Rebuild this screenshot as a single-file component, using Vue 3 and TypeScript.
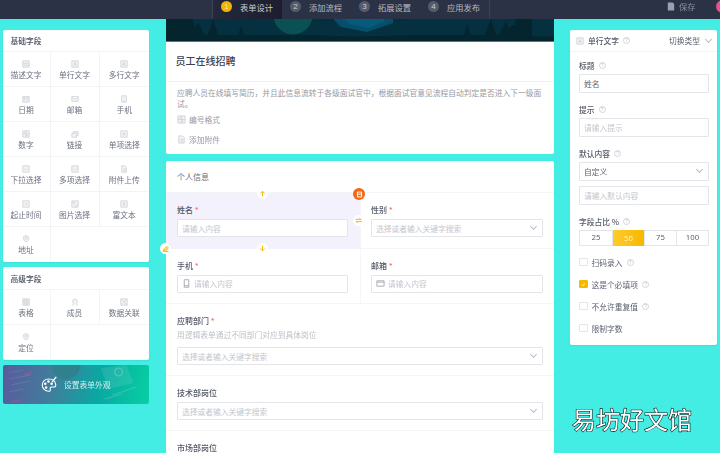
<script setup lang="ts">
const icons: Record<string, string> = {
  desc: 'M1 1h8v8H1zM1 4h8M1 6.5h8',
  text: 'M1 1h8v8H1zM3.5 7l1.5-4 1.5 4M4 5.8h2',
  date: 'M1 2h8v7H1zM1 4h8M3 1v2M7 1v2M3 5.5h1M6 5.5h1M3 7h1M6 7h1',
  mail: 'M1 2h8v6H1zM1 2.5l4 3 4-3',
  phone: 'M2 1h6v8H2zM4 7.6h2',
  num: 'M1 1h8v8H1zM5 1v8M1 5h8M2.5 3h1.5M6 7h1.5',
  link: 'M1 4h6v5H1zM3 4V2h6v5H7',
  radio: 'M1 1h8v8H1zM4 4h2v2H4z',
  drop: 'M1 1h8v8H1zM3 4l2 2 2-2',
  check: 'M1 1h8v8H1zM3 5l1.5 1.5L8 3',
  file: 'M2 1h4l2 2v6H2zM4 5h3M4 7h3',
  time: 'M1 1h8v8H1zM5 3v2.5h2',
  image: 'M1 1h8v8H1zM1 3h3v3M5 9l4-4',
  rich: 'M1 1h8v8H1zM3.5 7L5 3l1.5 4',
  pin: 'M5 .8a3.4 3.4 0 0 1 3.4 3.4C8.400 6.500 5 9.200 5 9.200S1.600 6.500 1.600 4.200A3.400 3.400 0 0 1 5 .8zM5 3a1.200 1.200 0 1 0 0 2.400A1.200 1.200 0 0 0 5 3z',
  table: 'M1 1h8v8H1zM1 3.700h8M1 6.300h8M3.700 1v8M6.300 1v8',
  user: 'M3 8V6.500A3 3 0 1 1 7 6.500V8M1.500 8.800h2M6.500 8.800h2',
  data: 'M1 1h8v8H1zM1 1l8 8M9 1L5 5M3 6.500l-1 1',
}
const basic = [
  ['描述文字', 'desc'], ['单行文字', 'text'], ['多行文字', 'text'],
  ['日期', 'date'], ['邮箱', 'mail'], ['手机', 'phone'],
  ['数字', 'num'], ['链接', 'link'], ['单项选择', 'radio'],
  ['下拉选择', 'drop'], ['多项选择', 'check'], ['附件上传', 'file'],
  ['起止时间', 'time'], ['图片选择', 'image'], ['富文本', 'rich'],
  ['地址', 'pin'],
]
const advanced = [['表格', 'table'], ['成员', 'user'], ['数据关联', 'data'], ['定位', 'pin']]
const steps = [['1', '表单设计'], ['2', '添加流程'], ['3', '拓展设置'], ['4', '应用发布']]
const checks = [
  ['扫码录入', false, true], ['这是个必填项', true, true],
  ['不允许重复值', false, true], ['限制字数', false, false],
] as const
</script>

<template>
  <div class="page">
    <header class="topbar">
      <nav class="steps">
        <div v-for="(s, i) in steps" :key="s[0]" class="step" :class="{ active: i === 0 }">
          <span class="num">{{ s[0] }}</span><span>{{ s[1] }}</span>
        </div>
      </nav>
      <div class="save">
        <svg width="8" height="9" viewBox="0 0 10 10"><path d="M1 0h6l2 2v8H1z" fill="#9aa0ad" /></svg>
        <span>保存</span>
      </div>
      <span class="avatar"></span>
    </header>

    <main class="main">
      <aside class="left">
        <section class="card">
          <h3 class="group-title">基础字段</h3>
          <div class="grid">
            <div v-for="f in basic" :key="f[0]" class="cell">
              <svg class="ficon" viewBox="0 0 10 10"><path :d="icons[f[1]]" /></svg>
              <span>{{ f[0] }}</span>
            </div>
            <div class="cell wide"></div>
          </div>
        </section>
        <section class="card">
          <h3 class="group-title adv">高级字段</h3>
          <div class="grid">
            <div v-for="f in advanced" :key="f[0]" class="cell">
              <svg class="ficon" viewBox="0 0 10 10"><path :d="icons[f[1]]" /></svg>
              <span>{{ f[0] }}</span>
            </div>
            <div class="cell wide"></div>
          </div>
        </section>
        <div class="theme">
          <svg class="theme-art" viewBox="0 0 147 39" preserveAspectRatio="none">
            <path d="M48 0h30c-2 12-10 15-17 14S50 8 48 0z" fill="#2f7f88" opacity=".8" />
            <path d="M98 3l26-3 7 18-25 6z" fill="#fff" opacity=".09" />
            <path d="M21 8l8-2v3l-8 2zM8 36l10-2v2l-10 2z" fill="#8a5a9c" opacity=".7" />
            <path d="M6 8l14-3M6 14l22-4M8 20l20-4M6 27l14-3" stroke="#fff" stroke-opacity=".1" fill="none" />
            <path d="M110 30l24-8M102 34l18-5" stroke="#fff" stroke-opacity=".18" fill="none" />
            <circle cx="116" cy="7" r="4" fill="none" stroke="#fff" stroke-opacity=".25" />
          </svg>
          <svg class="palette" width="17" height="17" viewBox="0 0 20 20">
            <path d="M9 3.500C4.800 3.500 1.500 6.300 1.500 10.500S5 18 9 18c1.800 0 2.300-1 1.800-2.500-.5-1.500.5-2.500 2-2.500h2.500c1.500 0 2.400-1 2-3C16.800 6 13.300 3.500 9 3.500z" fill="none" stroke="#fff" stroke-width="1.300" />
            <circle cx="5" cy="9" r="1.500" fill="#fff" /><circle cx="6" cy="13.500" r="1.500" fill="#fff" />
            <circle cx="8.800" cy="6.500" r="1.500" fill="#fff" /><circle cx="12.500" cy="9" r="1.500" fill="#fff" />
            <path d="M13 7l5-6" stroke="#fff" stroke-width="1.600" />
          </svg>
          <span class="theme-text">设置表单外观</span>
        </div>
      </aside>

      <div class="center">
        <div class="hero">
          <svg viewBox="0 0 388 23" preserveAspectRatio="none" width="388" height="23">
            <rect width="388" height="23" fill="#05303f" />
            <circle cx="127" cy="-4" r="19.500" fill="#0b5154" />
            <path d="M167 0l8 8 26 5 26-9V0z" fill="#064f6c" />
            <path d="M178 0l6 5 18 4 16-6V0z" fill="#085a7a" />
            <path d="M0 0h24l3-0 2 8 3-4 3 5 3 7h4l5-16 5 16h20l3-9 3 9h70l40 2 60-2 50 0 3-11 4 11h14l6-16 5 16h3l4-8 3-6 3 8 3-4 3 0V0h17v23H0z" fill="#04242e" />
            <path d="M0 17.500h388V23H0z" fill="#04242e" />
            <path d="M151 0l2 6 2-6 1 7 3-7 2 7 2-7 2 8 3-8zM230 0l1.500 6L233 0zM238 0l1.500 6L241 0z" fill="#062e3c" />
            <rect y="22" width="388" height="1" fill="#5d727b" />
          </svg>
        </div>
        <section class="form-head">
          <h1 class="form-title">员工在线招聘</h1>
          <div class="form-desc">
            <p>应聘人员在线填写简历，并且此信息流转于各级面试官中，根据面试官意见流程自动判定是否进入下一级面试。</p>
            <div class="meta">
              <svg class="ficon lg" viewBox="0 0 10 10"><path :d="icons.num" /></svg><span>编号格式</span>
            </div>
            <div class="meta meta2">
              <svg class="ficon lg" viewBox="0 0 10 10"><path :d="icons.file" /></svg><span>添加附件</span>
            </div>
          </div>
        </section>

        <section class="form-body">
          <div class="section-name">个人信息</div>
          <div class="two">
            <div class="field half selected">
              <label class="flabel">姓名 <em>*</em></label>
              <div class="input"><span class="ph">请输入内容</span></div>
              <span class="bubble up"><svg viewBox="0 0 10 10"><path d="M5 9V2M1.800 5L5 1.800 8.200 5" /></svg></span>
              <span class="bubble down"><svg viewBox="0 0 10 10"><path d="M5 1v7M1.800 5L5 8.200 8.200 5" /></svg></span>
              <span class="bubble swap"><svg viewBox="0 0 10 10"><path d="M.5 3.500h8L6 1M9.500 6.500h-8L4 9" /></svg></span>
              <span class="bubble edit"><svg viewBox="0 0 10 10"><path d="M1 9.200h8.500M1.500 7.500L7 2l2 2-2.500 3.500z" /></svg></span>
              <span class="del"><svg viewBox="0 0 10 10"><path d="M2 1.500h6v7H2zM2 4.500h6" /></svg></span>
            </div>
            <div class="field half right-cell">
              <label class="flabel">性别 <em>*</em></label>
              <div class="input"><span class="ph">选择或者输入关键字搜索</span><i class="chev"></i></div>
            </div>
          </div>
          <div class="two">
            <div class="field half">
              <label class="flabel">手机 <em>*</em></label>
              <div class="input">
                <svg class="inicon" viewBox="0 0 10 10"><path d="M2.500 .8h5v8.400h-5zM2.500 7.500h5" /></svg>
                <span class="ph">请输入内容</span>
              </div>
            </div>
            <div class="field half right-cell">
              <label class="flabel">邮箱 <em>*</em></label>
              <div class="input">
                <svg class="inicon" viewBox="0 0 10 10"><path d="M1 2h8v6H1zM1 3.500h8" /></svg>
                <span class="ph">请输入内容</span>
              </div>
            </div>
          </div>
          <div class="field full">
            <label class="flabel">应聘部门 <em>*</em></label>
            <div class="hint">用逻辑表单通过不同部门对应到具体岗位</div>
            <div class="input"><span class="ph">选择或者输入关键字搜索</span><i class="chev"></i></div>
          </div>
          <div class="field full">
            <label class="flabel">技术部岗位</label>
            <div class="input"><span class="ph">选择或者输入关键字搜索</span><i class="chev"></i></div>
          </div>
          <div class="field full last">
            <label class="flabel">市场部岗位</label>
          </div>
        </section>
      </div>

      <aside class="props">
        <div class="props-head">
          <svg class="ficon" viewBox="0 0 10 10"><path :d="icons.text" /></svg>
          <strong>单行文字</strong>
          <span class="q">?</span>
          <span class="switch">切换类型</span>
          <i class="chev static"></i>
        </div>
        <div class="props-body">
          <div class="plabel">标题 <span class="q">?</span></div>
          <div class="input p"><span class="val">姓名</span></div>
          <div class="plabel">提示 <span class="q">?</span></div>
          <div class="input p"><span class="ph">请输入提示</span></div>
          <div class="plabel">默认内容 <span class="q">?</span></div>
          <div class="input p"><span class="val">自定义</span><i class="chev"></i></div>
          <div class="input p second"><span class="ph">请输入默认内容</span></div>
          <div class="plabel">字段占比 % <span class="q">?</span></div>
          <div class="segs">
            <span>25</span><span class="on">50</span><span>75</span><span>100</span>
          </div>
          <div v-for="c in checks" :key="c[0]" class="chk">
            <span class="box" :class="{ on: c[1] }">
              <svg v-if="c[1]" viewBox="0 0 10 10"><path d="M2.500 5l2 2 3-4" /></svg>
            </span>
            <span>{{ c[0] }}</span>
            <span v-if="c[2]" class="q">?</span>
          </div>
        </div>
      </aside>
    </main>

    <div class="watermark">易坊好文馆</div>
  </div>
</template>

<style>
html, body { margin: 0; background: #43ede4; }
</style>

<style scoped>
.page {
  position: relative;
  width: 720px;
  height: 453px;
  overflow: hidden;
  background: #43ede4;
  font-family: "Noto Sans CJK SC", "Noto Sans", sans-serif;
  font-size: 8px;
  color: #5c6270;
  display: flex;
  flex-direction: column;
}
.topbar, .main { filter: blur(.3px); }
.topbar {
  flex: none;
  height: 19px;
  background: #2b3245;
  display: flex;
  align-items: stretch;
  position: relative;
  color: #b6bac4;
  font-size: 8.250px;
  padding-left: 212px;
  box-sizing: border-box;
}
.steps {
  display: flex;
  height: 100%;
  width: 278px;
  border-left: 1px solid #3c4356;
  border-right: 1px solid #3c4356;
  box-sizing: border-box;
}
.step {
  width: 69px;
  flex: none;
  padding: 0 0 6px 8px;
  box-sizing: border-box;
  display: flex;
  align-items: center;
  gap: 8px;
}
.step.active { background: linear-gradient(90deg, #23293a, #1d1d2f); color: #c8ccd4; }
.num {
  width: 11px;
  height: 11px;
  border-radius: 50%;
  background: #555b6c;
  color: #c8ccd4;
  font-size: 8px;
  line-height: 11px;
  text-align: center;
  flex: none;
  font-family: "Liberation Sans", sans-serif;
}
.active .num { background: #f5b400; color: #ffe9a8; }
.save {
  margin-left: 177px;
  padding-bottom: 7px;
  display: flex;
  align-items: center;
  gap: 4px;
  color: #8d92a0;
}
.avatar {
  position: absolute;
  left: 716px;
  top: 0;
  width: 13px;
  height: 13px;
  border-radius: 50%;
  background: #e8508f;
}
.main {
  flex: 1;
  min-height: 0;
  display: flex;
  align-items: flex-start;
}
.left {
  width: 146.500px;
  margin: 11px 0 0 2.500px;
  display: flex;
  flex-direction: column;
  gap: 5px;
  flex: none;
}
.card {
  background: #fff;
  border-radius: 2px;
  overflow: hidden;
  box-shadow: 0 1px 2px rgba(0, 0, 0, .06);
}
.group-title {
  margin: 0;
  height: 22px;
  line-height: 22px;
  padding-left: 8px;
  font-size: 7.750px;
  font-weight: 500;
  color: #4a4f5c;
}
.group-title.adv { height: 23px; line-height: 23px; }
.grid {
  display: grid;
  grid-template-columns: 48px 49px 49.500px;
  grid-auto-rows: 35px;
  border-top: 1px solid #f3f4f6;
  margin-top: -1px;
}
.cell {
  border-right: 1px solid #f3f4f6;
  border-bottom: 1px solid #f3f4f6;
  box-sizing: border-box;
  display: flex;
  flex-direction: column;
  align-items: center;
  padding-top: 7.500px;
  gap: 1px;
  font-size: 7.750px;
  line-height: 12px;
  color: #6b7080;
}
.cell:nth-child(3n) { border-right: 0; }
.cell.wide { grid-column: span 2; border-right: 0; border-bottom: 0; }
.grid > .cell:nth-last-child(2) { border-bottom: 0; }
.ficon {
  width: 8px;
  height: 8px;
  flex: none;
  fill: #f1f2f5;
  stroke: #cfd2d8;
  stroke-width: 1;
}
.ficon.lg { width: 9px; height: 9px; }
.theme {
  position: relative;
  height: 39px;
  border-radius: 2px;
  overflow: hidden;
  background: linear-gradient(100deg, #5a5a9c 0%, #3f7f9c 35%, #0aa7a2 65%, #06d0a2 100%);
  display: flex;
  align-items: center;
  justify-content: center;
  gap: 6px;
  box-sizing: border-box;
}
.theme-art { position: absolute; inset: 0; width: 100%; height: 100%; }
.palette, .theme-text { position: relative; }
.theme-text { color: rgba(255, 255, 255, .82); font-size: 7.750px; }
.center {
  width: 388px;
  margin-left: 17px;
  flex: none;
  display: flex;
  flex-direction: column;
}
.hero { height: 23px; line-height: 0; }
.form-head {
  background: #fff;
  height: 112px;
  border-radius: 0 0 2px 2px;
  display: flex;
  flex-direction: column;
}
.form-title {
  margin: 0;
  height: 40px;
  box-sizing: border-box;
  line-height: 38px;
  padding-left: 9.500px;
  font-size: 10px;
  font-weight: 500;
  color: #3d424f;
  border-bottom: 1px solid #f1f2f5;
}
.form-desc { padding: 5px 12px 0 11px; color: #9599a4; font-size: 7.750px; }
.form-desc p { margin: 0; line-height: 11px; }
.meta { display: flex; align-items: center; gap: 3px; margin-top: 5px; line-height: 11px; }
.meta2 { margin-top: 9px; }
.form-body {
  margin-top: 7px;
  background: #fff;
  border-radius: 2px 2px 0 0;
  height: 292px;
  position: relative;
}
.section-name {
  height: 32px;
  line-height: 31px;
  padding-left: 11px;
  font-size: 8px;
  color: #6a6f7c;
  border-bottom: 1px solid #f4f5f7;
  box-sizing: border-box;
}
.two { display: flex; border-bottom: 1px solid #f4f5f7; height: 55.500px; box-sizing: border-box; }
.field { box-sizing: border-box; position: relative; }
.half { width: 194px; padding: 10px 12px 0 11px; flex: none; }
.right-cell { padding: 10px 11px 0 10px; border-left: 1px solid #f4f5f7; }
.selected { background: #f3f1fc; height: 55.500px; }
.flabel { display: block; height: 16px; line-height: 14px; font-size: 8px; font-weight: 500; color: #555a68; }
.flabel em { color: #f4705f; font-style: normal; }
.input {
  height: 18px;
  border: 1px solid #e4e5ea;
  border-radius: 1px;
  background: #fff;
  box-sizing: border-box;
  display: flex;
  align-items: center;
  padding: 0 4px;
  gap: 3px;
  position: relative;
  font-size: 7.750px;
}
.ph { color: #c3c6cd; }
.val { color: #5c6270; }
.inicon { width: 9px; height: 9px; fill: none; stroke: #a4a7b0; stroke-width: 1; flex: none; }
.chev {
  position: absolute;
  right: 6px;
  top: 4px;
  width: 5px;
  height: 5px;
  border-right: 1px solid #b9bcc4;
  border-bottom: 1px solid #b9bcc4;
  box-sizing: border-box;
  transform: rotate(45deg);
}
.chev.static { position: static; flex: none; margin: -3px 6px 0 2px; }
.full { padding: 10px 11px; border-bottom: 1px solid #f4f5f7; }
.full .input { width: 366px; }
.full.last { border-bottom: 0; }
.hint { color: #bcc0c8; font-size: 7.750px; line-height: 12px; margin: -1px 0 6px; }
.bubble, .del {
  position: absolute;
  width: 11px;
  height: 11px;
  border-radius: 50%;
  background: #fff;
  z-index: 2;
  display: flex;
  align-items: center;
  justify-content: center;
}
.bubble svg, .del svg { width: 7px; height: 7px; fill: none; stroke: #f6b90f; stroke-width: 1.400; }
.up { left: 91px; top: -5px; }
.down { left: 91px; top: 50px; }
.swap { left: 187px; top: 22px; }
.edit { left: -6px; top: 50px; }
.del { left: 187px; top: -5px; width: 12px; height: 12px; background: #f5660f; }
.del svg { stroke: #fff; }
.edit svg { fill: #fbe08a; }
.props {
  width: 147px;
  margin: 11px 0 0 16px;
  flex: none;
  background: #fff;
  border-radius: 2px;
  height: 315px;
  box-shadow: 0 1px 2px rgba(0, 0, 0, .06);
}
.props-head {
  height: 22px;
  display: flex;
  align-items: center;
  padding-left: 6px;
  gap: 4px;
  border-bottom: 1px solid #f3f4f6;
  font-size: 7.750px;
  box-sizing: border-box;
}
.props-head strong { font-weight: 500; color: #555a68; }
.switch { margin-left: auto; color: #5c6270; }
.props-body { padding: 8px 9px 0; }
.plabel {
  display: flex;
  align-items: center;
  gap: 4px;
  height: 12px;
  box-sizing: border-box;
  padding-bottom: 1px;
  margin-bottom: 2px;
  font-size: 7.750px;
  font-weight: 500;
  color: #555a68;
}
.input.p { height: 19px; margin-bottom: 11px; width: 130px; border-color: #e3e5e9; }
.input.p.second { margin-top: -6px; margin-bottom: 11px; }
.q {
  width: 7px;
  height: 7px;
  border: 1px solid #d3d6db;
  border-radius: 50%;
  box-sizing: border-box;
  flex: none;
  color: #c3c6cd;
  font-size: 5px;
  line-height: 5px;
  font-weight: 400;
  text-align: center;
  font-family: "Liberation Sans", sans-serif;
}
.segs {
  display: grid;
  grid-template-columns: repeat(4, 1fr);
  width: 130px;
  height: 16px;
  border: 1px solid #e3e5e9;
  box-sizing: border-box;
  margin-bottom: 5px;
  line-height: 12px;
  text-align: center;
  font-size: 7.750px;
  font-family: "Noto Sans", sans-serif;
}
.segs span + span { border-left: 1px solid #e3e5e9; }
.segs .on {
  background: linear-gradient(90deg, #fecb2f, #f8b800);
  color: #fff3c9;
  margin: -1px 0;
  line-height: 16px;
}
.chk {
  display: flex;
  align-items: center;
  gap: 4px;
  height: 22px;
  font-size: 7.750px;
  color: #5c6270;
}
.box {
  width: 8.500px;
  height: 8.500px;
  border: 1px solid #e3e5e9;
  border-radius: 1px;
  box-sizing: border-box;
  flex: none;
  background: #fff;
  display: flex;
}
.box.on { background: #f8b800; border-color: #f8b800; }
.box svg { width: 7px; height: 7px; fill: none; stroke: #fff; stroke-width: 1.300; }
.watermark {
  position: absolute;
  left: 572px;
  top: 402px;
  font-size: 24px;
  line-height: 34px;
  color: #fff;
  -webkit-text-stroke: 1.200px #111;
  paint-order: stroke fill;
  font-family: "Noto Sans CJK SC", sans-serif;
  white-space: nowrap;
}
</style>
